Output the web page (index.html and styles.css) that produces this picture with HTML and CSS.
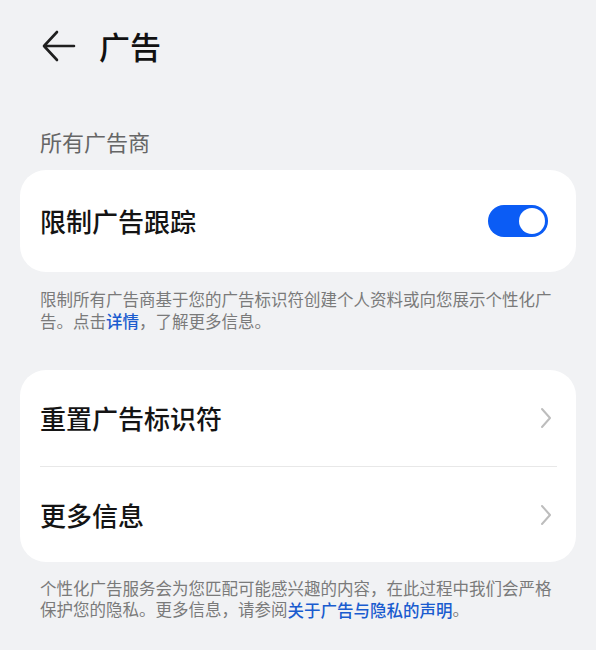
FILE: index.html
```html
<!DOCTYPE html>
<html lang="zh-CN">
<head>
  <meta charset="UTF-8">
  <meta name="viewport" content="width=device-width, initial-scale=1.0">
  <title>广告</title>
  <link rel="stylesheet" href="styles.css">
</head>
<body>
  <div class="page">
    <div class="top-bar">
      <svg class="back" width="34" height="34" viewBox="0 0 34 34">
        <path d="M32 17H3 M15 3L2 17L15 31" fill="none" stroke="#1f1f1f" stroke-width="2.6" stroke-linecap="round" stroke-linejoin="round"/>
      </svg>
      <h1 class="title">广告</h1>
    </div>

    <div class="group-title">所有广告商</div>
    <div class="card">
      <div class="row">
        <span class="row-text">限制广告跟踪</span>
        <div class="switch on"><i></i></div>
      </div>
    </div>
    <p class="note">限制所有广告商基于您的广告标识符创建个人资料或向您展示个性化广告。点击<a href="#">详情</a>，了解更多信息。</p>

    <div class="card card-list">
      <div class="row">
        <span class="row-text">重置广告标识符</span>
        <svg class="arrow" width="12" height="22" viewBox="0 0 12 22"><path d="M2 2L10 11L2 20" fill="none" stroke="#bdbdbd" stroke-width="2" stroke-linecap="round" stroke-linejoin="round"/></svg>
      </div>
      <div class="line"></div>
      <div class="row">
        <span class="row-text">更多信息</span>
        <svg class="arrow" width="12" height="22" viewBox="0 0 12 22"><path d="M2 2L10 11L2 20" fill="none" stroke="#bdbdbd" stroke-width="2" stroke-linecap="round" stroke-linejoin="round"/></svg>
      </div>
    </div>
    <p class="note note-last">个性化广告服务会为您匹配可能感兴趣的内容，在此过程中我们会严格保护您的隐私。更多信息，请参阅<a href="#">关于广告与隐私的声明</a>。</p>
  </div>
</body>
</html>
```

FILE: styles.css
```css
*{
  margin: 0;
  padding: 0;
  box-sizing: border-box;
}
html,body{
  background-color: #f1f2f4;
}
body{
  font-family: "Noto Sans CJK SC", "Noto Sans", sans-serif;
  color: #1a1a1a;
}
.page{
  width: 596px;
  height: 650px;
  overflow: hidden;
}
.top-bar{
  display: flex;
  align-items: center;
  height: 92px;
  padding-left: 42px;
}
.back{
  display: block;
}
.title{
  margin-left: 23px;
  font-size: 31px;
  font-weight: 500;
  line-height: 40px;
  color: #111;
}
.group-title{
  margin-top: 34px;
  padding-left: 40px;
  font-size: 22px;
  line-height: 30px;
  color: #666;
}
.card{
  margin: 14px 20px 0;
  background-color: #fff;
  border-radius: 26px;
}
.card .row{
  display: flex;
  align-items: center;
  justify-content: space-between;
  height: 102px;
  padding: 0 28px 0 20px;
}
.row-text{
  font-size: 26px;
  font-weight: 500;
  line-height: 34px;
  color: #141414;
}
.switch{
  position: relative;
  width: 60px;
  height: 32px;
  border-radius: 16px;
  background-color: #0b5cf5;
}
.switch i{
  position: absolute;
  top: 3px;
  right: 3px;
  width: 26px;
  height: 26px;
  border-radius: 50%;
  background-color: #fff;
}
.note{
  padding: 16px 40px 0;
  font-size: 16.5px;
  line-height: 22px;
  color: #7a7a7a;
}
.note a{
  display: inline-block;
  line-height: 20px;
  vertical-align: top;
  margin-top: 1px;
  color: #1a5ccf;
  font-weight: 500;
  text-decoration: none;
}
.note-last{
  line-height: 21px;
}
.card-list{
  margin-top: 38px;
}
.card-list .row{
  height: 96px;
  padding-right: 24px;
}
.card-list .row:last-child{
  height: 95px;
}
.line{
  height: 1px;
  margin: 0 19px 0 20px;
  background-color: #e8e8e8;
}
.arrow{
  display: block;
}
```
